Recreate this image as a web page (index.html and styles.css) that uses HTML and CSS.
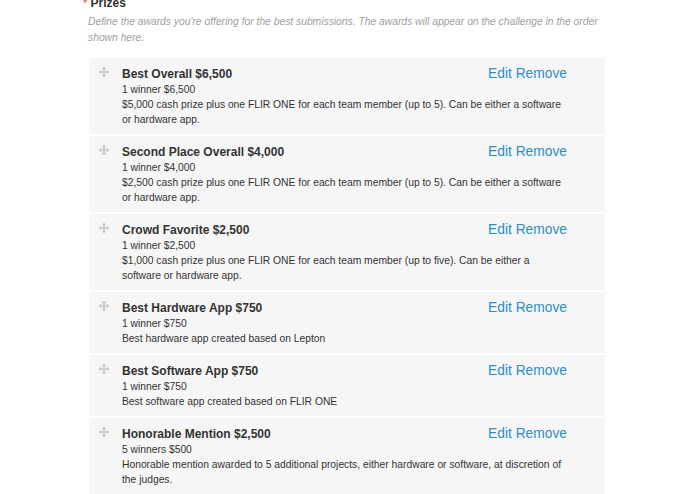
FILE: index.html
```html
<!DOCTYPE html>
<html>
<head>
<meta charset="utf-8">
<link rel="stylesheet" href="styles.css">
</head>
<body>
<div class="section">
  <div class="label"><span class="req">*</span> Prizes</div>
  <p class="help">Define the awards you're offering for the best submissions. The awards will appear on the challenge in the order shown here.</p>
  <ul class="prizes">
    <li class="prize">
      <span class="handle"><svg viewBox="0 0 12 12" width="12" height="12"><path d="M6 0.5 L8.3 3 H6.8 V5.2 H9 V3.7 L11.5 6 L9 8.3 V6.8 H6.8 V9 H8.3 L6 11.5 L3.7 9 H5.2 V6.8 H3 V8.3 L0.5 6 L3 3.7 V5.2 H5.2 V3 H3.7 Z" fill="#c8c8c8"/></svg></span>
      <div class="info">
        <div class="head"><div class="title">Best Overall $6,500</div><div class="actions"><a>Edit</a> <a>Remove</a></div></div>
        <div class="winners">1 winner $6,500</div>
        <div class="desc">$5,000 cash prize plus one FLIR ONE for each team member (up to 5). Can be either a software or hardware app.</div>
      </div>
    </li>
    <li class="prize">
      <span class="handle"><svg viewBox="0 0 12 12" width="12" height="12"><path d="M6 0.5 L8.3 3 H6.8 V5.2 H9 V3.7 L11.5 6 L9 8.3 V6.8 H6.8 V9 H8.3 L6 11.5 L3.7 9 H5.2 V6.8 H3 V8.3 L0.5 6 L3 3.7 V5.2 H5.2 V3 H3.7 Z" fill="#c8c8c8"/></svg></span>
      <div class="info">
        <div class="head"><div class="title">Second Place Overall $4,000</div><div class="actions"><a>Edit</a> <a>Remove</a></div></div>
        <div class="winners">1 winner $4,000</div>
        <div class="desc">$2,500 cash prize plus one FLIR ONE for each team member (up to 5). Can be either a software or hardware app.</div>
      </div>
    </li>
    <li class="prize">
      <span class="handle"><svg viewBox="0 0 12 12" width="12" height="12"><path d="M6 0.5 L8.3 3 H6.8 V5.2 H9 V3.7 L11.5 6 L9 8.3 V6.8 H6.8 V9 H8.3 L6 11.5 L3.7 9 H5.2 V6.8 H3 V8.3 L0.5 6 L3 3.7 V5.2 H5.2 V3 H3.7 Z" fill="#c8c8c8"/></svg></span>
      <div class="info">
        <div class="head"><div class="title">Crowd Favorite $2,500</div><div class="actions"><a>Edit</a> <a>Remove</a></div></div>
        <div class="winners">1 winner $2,500</div>
        <div class="desc">$1,000 cash prize plus one FLIR ONE for each team member (up to five). Can be either a software or hardware app.</div>
      </div>
    </li>
    <li class="prize">
      <span class="handle"><svg viewBox="0 0 12 12" width="12" height="12"><path d="M6 0.5 L8.3 3 H6.8 V5.2 H9 V3.7 L11.5 6 L9 8.3 V6.8 H6.8 V9 H8.3 L6 11.5 L3.7 9 H5.2 V6.8 H3 V8.3 L0.5 6 L3 3.7 V5.2 H5.2 V3 H3.7 Z" fill="#c8c8c8"/></svg></span>
      <div class="info">
        <div class="head"><div class="title">Best Hardware App $750</div><div class="actions"><a>Edit</a> <a>Remove</a></div></div>
        <div class="winners">1 winner $750</div>
        <div class="desc">Best hardware app created based on Lepton</div>
      </div>
    </li>
    <li class="prize">
      <span class="handle"><svg viewBox="0 0 12 12" width="12" height="12"><path d="M6 0.5 L8.3 3 H6.8 V5.2 H9 V3.7 L11.5 6 L9 8.3 V6.8 H6.8 V9 H8.3 L6 11.5 L3.7 9 H5.2 V6.8 H3 V8.3 L0.5 6 L3 3.7 V5.2 H5.2 V3 H3.7 Z" fill="#c8c8c8"/></svg></span>
      <div class="info">
        <div class="head"><div class="title">Best Software App $750</div><div class="actions"><a>Edit</a> <a>Remove</a></div></div>
        <div class="winners">1 winner $750</div>
        <div class="desc">Best software app created based on FLIR ONE</div>
      </div>
    </li>
    <li class="prize">
      <span class="handle"><svg viewBox="0 0 12 12" width="12" height="12"><path d="M6 0.5 L8.3 3 H6.8 V5.2 H9 V3.7 L11.5 6 L9 8.3 V6.8 H6.8 V9 H8.3 L6 11.5 L3.7 9 H5.2 V6.8 H3 V8.3 L0.5 6 L3 3.7 V5.2 H5.2 V3 H3.7 Z" fill="#c8c8c8"/></svg></span>
      <div class="info">
        <div class="head"><div class="title">Honorable Mention $2,500</div><div class="actions"><a>Edit</a> <a>Remove</a></div></div>
        <div class="winners">5 winners $500</div>
        <div class="desc">Honorable mention awarded to 5 additional projects, either hardware or software, at discretion of the judges.</div>
      </div>
    </li>
  </ul>
</div>
</body>
</html>
```
FILE: styles.css
```css
html, body {
  margin: 0;
  padding: 0;
  background: #fff;
}
body {
  font-family: "Liberation Sans", Arial, Helvetica, sans-serif;
  color: #333;
  overflow: hidden;
  height: 494px;
}
.section {
  margin-left: 88px;
  width: 517px;
  margin-top: -8px;
}
.label {
  font-size: 12px;
  font-weight: bold;
  line-height: 22px;
  color: #333;
}
.req {
  color: #e0504e;
  font-weight: normal;
  font-size: 11px;
  margin-left: -5px;
}
.help {
  margin: 0;
  font-size: 10.3px;
  font-style: italic;
  color: #a0a0a0;
  line-height: 16px;
}
.prizes {
  list-style: none;
  margin: 12px 0 0 1px;
  padding: 0;
  display: flex;
  flex-direction: column;
  gap: 2px;
}
.prize {
  display: flex;
  background: #f6f6f6;
  padding: 8px 38px 7px 0;
}
.handle {
  width: 12px;
  padding-left: 9px;
  padding-right: 12px;
  padding-top: 0;
  line-height: 0;
}
.info {
  flex: 1;
  min-width: 0;
}
.head {
  display: flex;
  justify-content: space-between;
  align-items: baseline;
}
.title {
  font-size: 12px;
  font-weight: bold;
  line-height: 16px;
  color: #333;
}
.winners, .desc {
  font-size: 10.3px;
  line-height: 15px;
  color: #333;
}
.actions {
  font-size: 13.8px;
  line-height: 16px;
  color: #2d8ec6;
  white-space: nowrap;
}
.actions a {
  color: #2d8ec6;
}
```
